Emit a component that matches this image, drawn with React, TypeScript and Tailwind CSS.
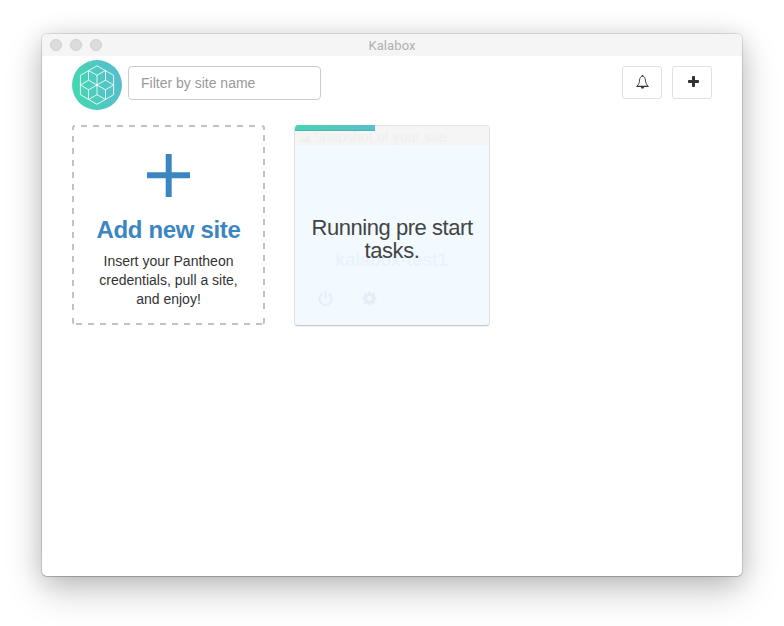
import React from "react";

function Logo() {
  return (
    <svg width="50" height="50" viewBox="0 0 50 50" className="shrink-0">
      <defs>
        <linearGradient id="brand" x1="0" y1="0.6" x2="1" y2="0.4">
          <stop offset="0" stopColor="#44d8b1" />
          <stop offset="1" stopColor="#57bdce" />
        </linearGradient>
      </defs>
      <circle cx="25" cy="25" r="25" fill="url(#brand)" />
      <g fill="none" stroke="#fff" strokeOpacity="0.85" strokeWidth="1" strokeLinejoin="round">
        <path d="M25 5.8 41.6 15.3V34.7L25 44.3 8.4 34.7V15.3Z" />
        <path d="M16.6 10.5 25 15.3 33.4 10.5M16.6 39.5 25 34.7 33.4 39.5" />
        <path d="M16.5 10.5V20.2M33.5 10.5V20.2M16.5 39.5V29.8M33.5 39.5V29.8M25 15.3V34.7" />
        <path d="M8.4 25 16.6 20.2 33.4 29.8 41.6 25M8.4 25 16.6 29.8 33.4 20.2 41.6 25" />
      </g>
      <circle cx="25" cy="25" r="1.1" fill="#fff" />
    </svg>
  );
}

function Bell() {
  return (
    <svg width="13" height="14" viewBox="0 0 13 14" fill="none" stroke="#333" strokeWidth="0.9" className="mb-[1px] ml-[1px]">
      <path d="M6.5 1.3C4.5 1.5 3.8 3 3.6 5C3.3 8.2 2.5 9.6 .9 11.2H12.1C10.5 9.6 9.7 8.2 9.4 5C9.2 3 8.5 1.5 6.5 1.3Z" />
      <path d="M.4 11.5H12.6" strokeWidth="1" />
      <path d="M5.1 12a1.4 1.6 0 0 0 2.8 0Z" fill="#333" strokeWidth=".3" />
      <path d="M6.5 .1V1.6" strokeWidth="1.4" />
    </svg>
  );
}

function Power() {
  return (
    <svg width="15" height="15" viewBox="0 0 15 15" fill="none" stroke="#e5edf6" strokeWidth="2">
      <path d="M4.2 2.9a6 6 0 1 0 6.6 0M7.5 0V7.5" />
    </svg>
  );
}

function Gear() {
  return (
    <svg width="15" height="15" viewBox="0 0 15 15" fill="none" stroke="#e5edf6">
      <circle cx="7.5" cy="7.5" r="4" strokeWidth="3.2" />
      <path
        d="M7.5 .5V3M7.5 12V14.5M.5 7.5H3M12 7.5H14.5M2.5 2.5 4.3 4.3M10.7 10.7 12.5 12.5M12.5 2.5 10.7 4.3M4.3 10.7 2.5 12.5"
        strokeWidth="2.6"
      />
    </svg>
  );
}

function BrokenImage() {
  return (
    <svg width="16" height="16" viewBox="0 0 16 16" className="shrink-0">
      <path d="M2 13 5 9l3 1 3-4 3 7Z" fill="#efefef" />
    </svg>
  );
}

function AddSite() {
  return (
    <div className="relative h-[200px] w-[193px] shrink-0 text-center">
      <svg width="193" height="200" className="absolute inset-0" fill="none" stroke="#c2c2c2" strokeWidth="2">
        <path d="M9 1H187" strokeDasharray="6 6" />
        <path d="M4 199H190" strokeDasharray="6 6" />
        <path d="M1 11V188M192 10V188" strokeDasharray="6 6" />
        <path d="M1 5V3Q1 1 3 1M190 1Q192 1 192 3V5M1 193V197Q1 198 2 198.5M191 198.5Q192 198 192 197V193" />
      </svg>
      <svg width="43" height="43" viewBox="0 0 43 43" className="mx-auto mt-[29px]" fill="#3b85c1">
        <path d="M18.7 0h6v18.3H43v6H24.7V43h-6V24.3H0v-6h18.7z" />
      </svg>
      <h2 className="mt-[19px] text-[24px] leading-[27px] font-bold tracking-[-0.35px] whitespace-nowrap text-[#3b85c1]">
        Add new site
      </h2>
      <p className="mt-[9px] text-[14px] leading-[19px] text-[#333]">
        Insert your Pantheon
        <br />
        credentials, pull a site,
        <br />
        and enjoy!
      </p>
    </div>
  );
}

function SiteCard() {
  return (
    <div className="relative h-[201px] w-[196px] shrink-0 overflow-hidden rounded-[4px] border border-t-0 border-[#dfe2e4] border-b-[#c8cccf] bg-[#f2f9ff] shadow-[0_1px_1px_rgba(0,0,0,0.06)]">
      <div className="h-[20px] bg-[#f5f5f5] shadow-[inset_0_1px_0_#e4e4e4]">
        <div className="h-[6px] w-[80px] border-b border-[#4eb5ad] bg-gradient-to-r from-[#48d4b1] to-[#5abfca]" />
      </div>
      <div className="absolute top-[4px] left-[2px] flex items-center text-[14px] leading-[16px] tracking-[0.1px] text-[#f0f0f0]">
        <BrokenImage />
        Snapshot of your site
      </div>
      <div className="absolute top-[124px] left-0 w-full text-center text-[18px] leading-[22px] tracking-[0.4px] text-[#e9f1fb]">
        kalabox-test1
      </div>
      <div className="absolute top-[91px] left-0 w-full text-center text-[22px] leading-[23px] tracking-[-0.45px] text-[#444]">
        Running pre start
        <br />
        tasks.
      </div>
      <div className="mt-[146px] flex gap-[29px] pl-[23px]">
        <Power />
        <Gear />
      </div>
    </div>
  );
}

export default function App() {
  return (
    <div className="h-[626px] w-[784px] overflow-hidden bg-white px-[42px] pt-[34px] font-['Liberation_Sans',Arial,sans-serif]">
      <div className="h-[542px] w-[700px] overflow-hidden rounded-[5px] bg-white shadow-[0_0_0_1px_rgba(0,0,0,0.1),0_1px_1px_rgba(0,0,0,0.15),0_14px_36px_rgba(0,0,0,0.22),0_2px_24px_rgba(0,0,0,0.12)]">
        <div className="flex h-[22px] items-center bg-[#f5f5f5] pl-[8px]">
          <div className="flex w-[52px] gap-[8px]">
            <i className="size-[12px] rounded-full border border-[#cecece] bg-[#dcdcdc]" />
            <i className="size-[12px] rounded-full border border-[#cecece] bg-[#dcdcdc]" />
            <i className="size-[12px] rounded-full border border-[#cecece] bg-[#dcdcdc]" />
          </div>
          <div className="flex-1 pt-[1px] pr-[60px] text-center font-['Roboto',sans-serif] text-[13px] leading-[22px] tracking-[0.1px] text-[#b0b0b0]">
            Kalabox
          </div>
        </div>
        <div className="flex h-[69px] items-start px-[30px] pt-[4px]">
          <Logo />
          <input
            placeholder="Filter by site name"
            className="mt-[6px] ml-[6px] h-[34px] w-[193px] rounded-[4px] border border-[#ccc] px-[12px] text-[14px] placeholder:text-[#999]"
          />
          <div className="mt-[6px] ml-auto flex gap-[10px]">
            <button className="flex h-[33px] w-[40px] items-center justify-center rounded-[3px] border border-[#e1e1e1]">
              <Bell />
            </button>
            <button className="flex h-[33px] w-[40px] items-center justify-center rounded-[3px] border border-[#e1e1e1] pb-[2px] pl-[3px]">
              <svg width="11" height="11" viewBox="0 0 11 11" fill="#333">
                <path d="M4 .8Q4 0 4.8 0H6.2Q7 0 7 .8V4H10.2Q11 4 11 4.8V6.2Q11 7 10.2 7H7V10.2Q7 11 6.2 11H4.8Q4 11 4 10.2V7H.8Q0 7 0 6.2V4.8Q0 4 .8 4H4Z" />
              </svg>
            </button>
          </div>
        </div>
        <div className="flex gap-[29px] px-[30px]">
          <AddSite />
          <SiteCard />
        </div>
      </div>
    </div>
  );
}
